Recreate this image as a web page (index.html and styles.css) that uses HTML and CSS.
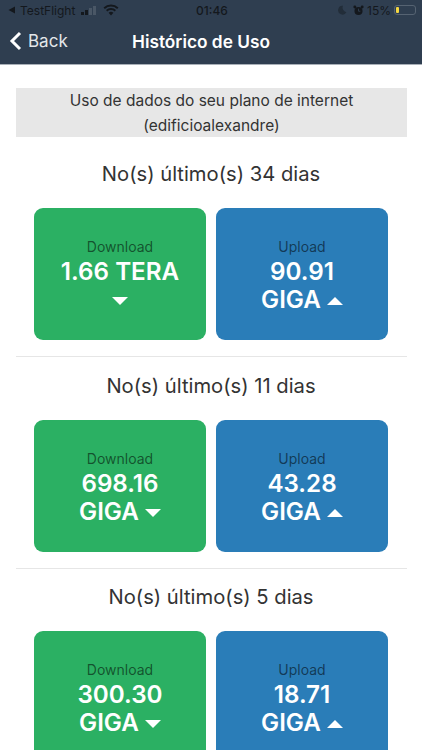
FILE: index.html
```html
<!DOCTYPE html>
<html lang="pt">
<head>
    <meta charset="UTF-8">
    <title>Histórico de Uso</title>
    <link rel="stylesheet" href="styles.css">
</head>
<body>
    <div class="phone">
        <div class="header">
            <div class="status">
                <div class="status-left">
                    <svg class="back-tri" viewBox="0 0 8 8"><path d="M7 0.5V7.5L0.5 4Z"/></svg>
                    <span>TestFlight</span>
                    <span class="signal"><i class="b1"></i><i class="b2"></i><i class="b3"></i><i class="b4"></i></span>
                    <svg class="wifi" viewBox="0 0 16 12"><path d="M8 11.5L5.6 8.8A3.6 3.6 0 0 1 10.4 8.8Z"/><path d="M4.3 7.4L3 6A7.2 7.2 0 0 1 13 6L11.7 7.4A5.4 5.4 0 0 0 4.3 7.4Z"/><path d="M1.9 4.9L0.5 3.4A11 11 0 0 1 15.5 3.4L14.1 4.9A9 9 0 0 0 1.9 4.9Z"/></svg>
                </div>
                <div class="status-time">01:46</div>
                <div class="status-right">
                    <svg class="moon" viewBox="0 0 10 10"><path d="M6 0.8A4.4 4.4 0 1 0 9.4 7.2A4.6 4.6 0 0 1 6 0.8Z"/></svg>
                    <svg class="alarm" viewBox="0 0 12 12"><circle cx="6" cy="6.6" r="4.4"/><circle cx="2" cy="2.2" r="1.6"/><circle cx="10" cy="2.2" r="1.6"/><path d="M6 4V6.8H8" fill="none" stroke="#2f3e50" stroke-width="1"/></svg>
                    <span>15%</span>
                    <span class="battery"><i></i></span>
                </div>
            </div>
            <div class="nav">
                <a class="back" href="#">
                    <svg viewBox="0 0 13 20"><path d="M11 2L3 10L11 18" fill="none" stroke="#fff" stroke-width="3"/></svg>
                    <span>Back</span>
                </a>
                <div class="nav-title">Histórico de Uso</div>
            </div>
        </div>

        <div class="content">
            <div class="notice">Uso de dados do seu plano de internet (edificioalexandre)</div>

            <div class="period first">
                <h2>No(s) último(s) 34 dias</h2>
                <div class="cards">
                    <div class="card green">
                        <div class="label">Download</div>
                        <div class="value">1.66 TERA</div>
                        <div class="value"><span class="tri down"></span></div>
                    </div>
                    <div class="card blue">
                        <div class="label">Upload</div>
                        <div class="value">90.91</div>
                        <div class="value">GIGA <span class="tri up"></span></div>
                    </div>
                </div>
            </div>

            <div class="period">
                <h2>No(s) último(s) 11 dias</h2>
                <div class="cards">
                    <div class="card green">
                        <div class="label">Download</div>
                        <div class="value">698.16</div>
                        <div class="value">GIGA <span class="tri down"></span></div>
                    </div>
                    <div class="card blue">
                        <div class="label">Upload</div>
                        <div class="value">43.28</div>
                        <div class="value">GIGA <span class="tri up"></span></div>
                    </div>
                </div>
            </div>

            <div class="period last">
                <h2>No(s) último(s) 5 dias</h2>
                <div class="cards">
                    <div class="card green">
                        <div class="label">Download</div>
                        <div class="value">300.30</div>
                        <div class="value">GIGA <span class="tri down"></span></div>
                    </div>
                    <div class="card blue">
                        <div class="label">Upload</div>
                        <div class="value">18.71</div>
                        <div class="value">GIGA <span class="tri up"></span></div>
                    </div>
                </div>
            </div>
        </div>
    </div>
</body>
</html>
```

FILE: styles.css
```css
* {
    margin: 0;
    padding: 0;
    box-sizing: border-box;
}
html, body {
    height: 100%;
    overflow: hidden;
    background: #fff;
}
body {
    font-family: Inter, "Liberation Sans", sans-serif;
    color: #333;
}
.phone {
    width: 422px;
    height: 750px;
    overflow: hidden;
}

/* top bar */
.header {
    height: 65px;
    background: #2f3e50;
    border-bottom: 1px solid #a9b0b8;
}
.status {
    height: 20px;
    display: grid;
    grid-template-columns: 1fr auto 1fr;
    align-items: center;
    padding: 0 6px 0 8px;
    font-size: 12px;
    color: #14181d;
}
.status-left, .status-right {
    display: flex;
    align-items: center;
}
.status-right {
    justify-content: flex-end;
    gap: 3px;
}
.back-tri {
    width: 8px;
    height: 8px;
    fill: #14181d;
    margin-right: 4px;
}
.signal {
    display: flex;
    align-items: flex-end;
    gap: 1px;
    height: 9px;
    margin: 0 7px 0 6px;
}
.signal i {
    width: 3px;
    background: #14181d;
}
.signal .b1 { height: 3px; }
.signal .b2 { height: 5px; }
.signal .b3 { height: 7px; background: #4a5766; }
.signal .b4 { height: 9px; background: #4a5766; }
.wifi {
    width: 16px;
    height: 12px;
    fill: #14181d;
}
.status-time {
    font-weight: 500;
    font-size: 12px;
}
.moon {
    width: 10px;
    height: 10px;
    fill: #222d39;
    margin-right: 3px;
}
.alarm {
    width: 11px;
    height: 11px;
    fill: #14181d;
    margin-right: 0;
}
.battery {
    width: 22px;
    height: 10px;
    border: 1px solid #566372;
    border-radius: 3px;
    padding: 1px;
    display: flex;
}
.battery i {
    width: 3px;
    background: #f5d742;
    border-radius: 1px;
}
.nav {
    height: 44px;
    display: flex;
    align-items: center;
    color: #fff;
    margin-top: -1px;
}
.back {
    display: flex;
    align-items: center;
    gap: 6px;
    width: 132px;
    padding-left: 9px;
    font-size: 17px;
    color: #e4e7ea;
    text-decoration: none;
}
.back svg {
    width: 13px;
    height: 20px;
}
.nav-title {
    font-size: 17.3px;
    font-weight: 600;
}

/* body */
.content {
    padding: 23px 15px 0 16px;
}
.notice {
    background: #e7e7e7;
    text-align: center;
    font-size: 15.5px;
    line-height: 25px;
    padding: 0 40px;
    height: 49px;
    color: #333;
}
.period {
    padding-top: 17px;
    border-top: 1px solid #e6e6e6;
}
.period.first {
    border-top: 0;
    padding-top: 25px;
}
.period + .period {
    margin-top: 16px;
}
.period.last {
    padding-top: 16px;
}
.period h2 {
    font-size: 20.2px;
    font-weight: 400;
    text-align: center;
    line-height: 24px;
    color: #333;
    padding-right: 1px;
}
.cards {
    display: grid;
    grid-template-columns: 172px 172px;
    gap: 10px;
    padding: 22px 18px 0;
}
.card {
    height: 132px;
    border-radius: 9px;
    text-align: center;
    padding-top: 29px;
    color: #fff;
}
.card.green { background: #2bb063; }
.card.blue { background: #2a7db8; }
.label {
    font-size: 14px;
    line-height: 20px;
    color: rgba(0, 0, 0, 0.55);
    margin-bottom: 1px;
}
.value {
    font-size: 24.2px;
    font-weight: 600;
    line-height: 28px;
}
.tri {
    display: inline-block;
    vertical-align: middle;
    width: 0;
    height: 0;
    border-left: 8px solid transparent;
    border-right: 8px solid transparent;
    margin-top: -1px;
}
.tri.down { border-top: 8px solid #fff; }
.tri.up { border-bottom: 8px solid #fff; }
```
